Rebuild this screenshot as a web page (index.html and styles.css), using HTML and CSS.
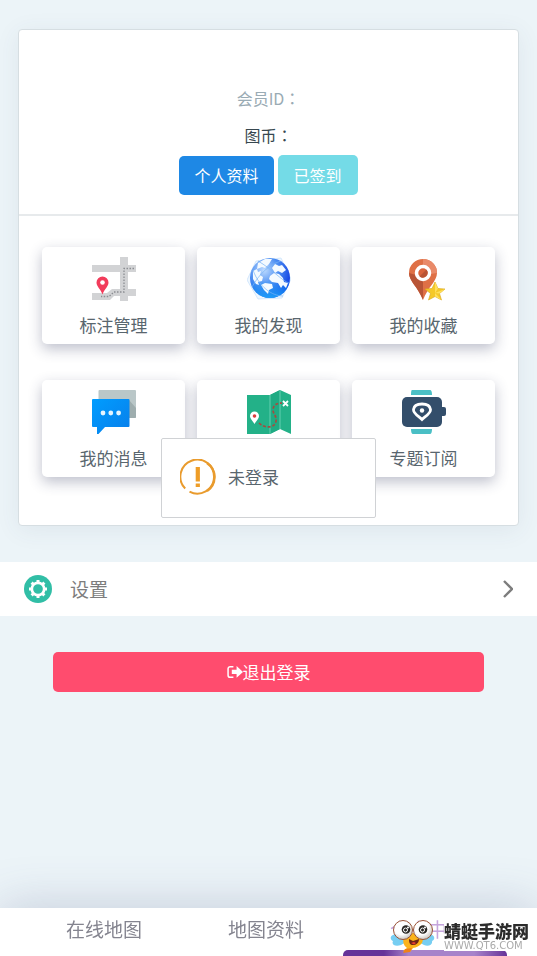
FILE: index.html
```html
<!DOCTYPE html>
<html lang="zh-CN">
<head>
<meta charset="utf-8">
<meta name="viewport" content="width=device-width, initial-scale=1">
<title>个人中心</title>
<link rel="stylesheet" href="styles.css">
</head>
<body>
<main>
  <section class="card">
    <header class="profile">
      <p class="member">会员ID<span class="colon" lang="zh-TW">：</span></p>
      <p class="coins">图币<span class="colon" lang="zh-TW">：</span></p>
      <div class="actions">
        <button class="btn btn-primary" type="button">个人资料</button>
        <button class="btn btn-signed" type="button">已签到</button>
      </div>
    </header>
    <nav class="tiles">
      <a class="tile" href="#">
        <svg class="tile-icon" viewBox="0 0 44 44">
          <path d="M0 8H28V0h8v8h8v7h-8v17h8v7h-8v5h-8v-5h-6l-4 4H0v-7h15l5-4h8V15H0z" fill="#d2d3d5"/>
          <path d="M42 11.500H32V35H22l-5 4.500H9" fill="none" stroke="#8c8e93" stroke-width="1.300" stroke-dasharray="1.500 1.500"/>
          <path d="M10.500 37.500C8.500 32 4.500 29.500 4.500 25.500a6 6 0 0 1 12 0c0 4-4 6.500-6 12z" fill="#f23c5b"/>
          <circle cx="10.500" cy="25.500" r="2.300" fill="#fff"/>
        </svg>
        <span>标注管理</span>
      </a>
      <a class="tile" href="#">
        <svg class="tile-icon" viewBox="0 0 44 44">
          <defs>
            <radialGradient id="globe" cx=".35" cy=".3" r=".75">
              <stop offset="0" stop-color="#bfdcff"/><stop offset=".5" stop-color="#4b8df2"/><stop offset="1" stop-color="#0834e0"/>
            </radialGradient>
            <linearGradient id="glow" x2="0" y2="1"><stop offset=".55" stop-color="#18b4ff" stop-opacity="0"/><stop offset="1" stop-color="#22b8ff" stop-opacity=".8"/></linearGradient>
          </defs>
          <path d="M9 4 34 1l10 21-9 19-24 1L0 23z" fill="#eef7ff" stroke="#c5e0fb" stroke-width=".7"/>
          <circle cx="23" cy="21" r="20" fill="url(#globe)"/>
          <circle cx="23" cy="21" r="20" fill="url(#glow)"/>
          <g fill="#f4faff">
            <path d="m11 6 7-4 7 0-3 5-4 4-3-1-5 2zM6 14l4-2 1 3 3-1-1 4 3 2-1 4-4 1 1 3-3-1-3-5z"/>
            <path d="m25 11 3-4 4 2 3-1 4 5-4 3-4-2-3 2z"/>
            <path d="m23 19 4-3 5 1 4 4 1 4 4 1-2 5-3-3-2 3-3-5-6-1-3-3z"/>
            <path d="m14 28 4-2 7 1 1 4-4 2-1 4-4-4z"/>
          </g>
          <path d="M5 30C12 17 23 7 34 4M11 4c14 8 24 20 31 22M6 13c6 17 19 26 30 26" fill="none" stroke="#78b5f5" stroke-width=".7"/>
        </svg>
        <span>我的发现</span>
      </a>
      <a class="tile" href="#">
        <svg class="tile-icon" viewBox="0 0 44 44">
          <path d="M21 43C16 30 7 24 7 16a14 14 0 0 1 28 0c0 8-9 14-14 27z" fill="#df7046"/>
          <path d="M21 43C16 30 7 24 7 16l14 4z" fill="#b85436"/>
          <path d="M21 2a14 14 0 0 1 14 14l-14 2z" fill="#e98a69"/>
          <circle cx="21" cy="16" r="6.500" fill="#d9633b" stroke="#fff" stroke-width="3.500"/>
          <path d="M17.500 19.500a5 5 0 0 0 7-7z" fill="#b95333"/>
          <path d="m33 25 3 6.500 7 .5-5.500 4.500 2 6.500-6.500-3.500-6.500 3.500 2-6.500L23 32l7-.5z" fill="#f5c928" stroke="#d9a51d" stroke-width=".6"/>
          <path d="m33 25 3 6.500-3 4.500zM43 32l-10 4 4.500.500zM39.500 43 33 36v3.500z" fill="#ffe05c"/>
        </svg>
        <span>我的收藏</span>
      </a>
      <a class="tile" href="#">
        <svg class="tile-icon" viewBox="0 0 44 44">
          <defs><linearGradient id="chat" x2="1" y2="1"><stop stop-color="#009dff"/><stop offset="1" stop-color="#087eea"/></linearGradient></defs>
          <rect x="6.500" y="0" width="37.500" height="28" rx="1" fill="#bac7c8"/>
          <path d="m37 10 7 8v9a1 1 0 0 1-1 1h-6z" fill="#9eadae"/>
          <path d="M1 9h35.500a1 1 0 0 1 1 1v26a1 1 0 0 1-1 1H13l-6.500 7H5v-7H1a1 1 0 0 1-1-1V10a1 1 0 0 1 1-1z" fill="url(#chat)"/>
          <g fill="#e5f5ff"><circle cx="11" cy="23" r="2.400"/><circle cx="18.800" cy="23" r="2.400"/><circle cx="26.600" cy="23" r="2.400"/></g>
        </svg>
        <span>我的消息</span>
      </a>
      <a class="tile" href="#">
        <svg class="tile-icon" viewBox="0 0 44 44">
          <path d="M0 5h23l10-5 11 5v39l-11-5-10 5H0z" fill="#23b188"/>
          <path d="M23 5 33 0v39l-10 5z" fill="#1fab83"/>
          <path d="M23 5v39M33 0v39" stroke="#65cfb0" stroke-width="1"/>
          <path d="M12 33c6 6 16 5 17-2 1-5-3-7-3-11 0-5 4-7 9-7" fill="none" stroke="#a64b3f" stroke-width="1.700" stroke-dasharray="3 1.800"/>
          <path d="M7.500 34C6 31 3 29 3 26a4.500 4.500 0 0 1 9 0c0 3-3 5-4.500 8z" fill="#fff"/>
          <circle cx="7.500" cy="26" r="1.800" fill="#dc3d3d"/>
          <path d="m36 11 5 5m0-5-5 5" stroke="#fff" stroke-width="1.800"/>
        </svg>
      </a>
      <a class="tile" href="#">
        <svg class="tile-icon" viewBox="0 0 44 44">
          <path d="M10 0h18q2 0 2 5H9q0-5 1-5zM9 39h21q0 5-2 5H11q-2 0-2-5z" fill="#4abfc5"/>
          <rect x="0" y="7" width="40" height="30" rx="5" fill="#334e6b"/>
          <path d="M39 17h3a2 2 0 0 1 2 2v5a2 2 0 0 1-2 2h-3z" fill="#334e6b"/>
          <path d="M20 29.500c-3-3-9-6-8.500-10 .4-3.700 4.200-5.500 8.500-5.500s8.100 1.800 8.500 5.500c.5 4-5.500 7-8.500 10z" fill="none" stroke="#fff" stroke-width="2.800"/>
          <circle cx="20" cy="20.500" r="2.200" fill="#fff"/>
        </svg>
        <span>专题订阅</span>
      </a>
    </nav>
  </section>

  <a class="setting" href="#">
    <svg class="gear" viewBox="0 0 28 28">
      <circle cx="14" cy="14" r="14" fill="#31bea6"/>
      <g stroke="#fff" fill="none"><circle cx="14" cy="14" r="6.200" stroke-width="2.700"/><path d="M14 5v3m0 12v3m9-9h-3M8 14H5M20.400 7.600l-2.200 2.200m-8.400 8.400-2.200 2.200m12.800 0-2.200-2.200M9.800 9.800 7.600 7.600" stroke-width="3"/></g>
    </svg>
    <span class="setting-label">设置</span>
    <svg class="chevron" viewBox="0 0 10 18"><path d="m1 1 8 8-8 8" fill="none" stroke="#7d7d7d" stroke-width="2.400"/></svg>
  </a>

  <button class="logout" type="button">
    <svg class="exit" viewBox="0 0 15 14"><path d="M6 1.500H3a2 2 0 0 0-2 2v6a2 2 0 0 0 2 2h3" fill="none" stroke="#fff" stroke-width="1.400"/><path d="M4.500 4.500H9V1l6 5.500L9 12V8.500H4.500z" fill="#fff"/></svg>退出登录
  </button>
</main>

<div class="toast" role="status">
  <svg class="warn" viewBox="0 0 36 36">
    <path d="M5.200 29.500A17 17 0 1 1 9.500 32.700" fill="none" stroke="#e99b2d" stroke-width="2"/>
    <path d="M27 4a17 17 0 0 1 0 28" fill="none" stroke="#e99b2d" stroke-width="2.600"/>
    <path d="M15.700 8h4.200v14.500h-4.200zM15.700 24.500h4.200v3.500h-4.200z" fill="#ee9d27"/>
  </svg>
  <span>未登录</span>
</div>

<nav class="tabs">
  <a class="tab" href="#">在线地图</a>
  <a class="tab" href="#">地图资料</a>
  <a class="tab tab-active" href="#">个人中心</a>
</nav>

<div class="brand">
  <svg class="mascot" viewBox="0 0 46 34">
    <defs><radialGradient id="eye" cx=".4" cy=".35" r=".65"><stop offset=".6" stop-color="#fff"/><stop offset="1" stop-color="#cbc8c3"/></radialGradient></defs>
    <path d="M8 15C0 15-1 20 3 22c-2 4 3 6 8 4l9-5zM37 15c8 0 9 5 5 7 1 4-4 6-8 4l-9-5z" fill="#77cef2"/>
    <path d="M15 17c3-4 14-4 17 0 3 6-2 11-9 12l-3 4-7-1 4-3c-4-3-5-8-2-12z" fill="#fbb31b"/>
    <path d="m19 20 4 2 6-2c0 4-3 6-6 6s-4-2-4-6z" fill="#6d2417"/>
    <path d="m21 24 3-1 2 1-2 1.500z" fill="#e93f30"/>
    <path d="m15 30 7-1-2 4-7 1z" fill="#ef8119"/>
    <circle cx="13" cy="11" r="9.500" fill="url(#eye)" stroke="#995236"/>
    <circle cx="33" cy="11" r="9.500" fill="url(#eye)" stroke="#995236"/>
    <circle cx="16" cy="10.500" r="4.300" fill="#292724"/><circle cx="33" cy="10.500" r="4.300" fill="#292724"/>
    <g fill="none" stroke="#fff"><circle cx="15.500" cy="11" r="2"/><circle cx="32.500" cy="11" r="2"/></g>
    <g fill="#fff"><circle cx="18" cy="8.500" r="1"/><circle cx="35" cy="8.500" r="1"/></g>
  </svg>
  <div class="brand-text">
    <strong>蜻蜓手游网</strong>
    <small>WWW.QT6.COM</small>
  </div>
</div>
</body>
</html>
```
FILE: styles.css
```css
* {
  box-sizing: border-box;
}

body {
  margin: 0;
  min-height: 100vh;
  background: #ecf4f8;
  color: #59666e;
  font: 17px/24px "Noto Sans CJK SC", sans-serif;
}

a {
  color: inherit;
  text-decoration: none;
}

button {
  border: 0;
  font: inherit;
  cursor: pointer;
}

svg {
  display: block;
  flex: none;
}

main {
  padding-top: 29px;
  padding-bottom: 48px;
}

.card {
  margin: 0 18px;
  border: 1px solid #d6dee2;
  border-radius: 4px;
  background: #fff;
  box-shadow: 0 4px 24px rgba(60, 75, 100, 0.08);
}

.profile {
  padding: 50px 16px 19px;
  border-bottom: 2px solid #e7eaec;
  font-size: 16px;
  line-height: 37px;
  text-align: center;
}

.profile p {
  margin: 0;
}

.member {
  color: #9aabb4;
}

.coins {
  color: #37474f;
}

.colon {
  font-family: "Noto Sans CJK TC", sans-serif;
}

.actions {
  display: flex;
  justify-content: center;
  align-items: flex-end;
  gap: 4px;
  margin-top: 1px;
}

.btn {
  height: 39px;
  padding: 0 15px;
  border-radius: 5px;
  color: #fff;
}

.btn-primary {
  background: #1e88e5;
}

.btn-signed {
  height: 40px;
  padding: 0 16px;
  background: #74dbe7;
}

.tiles {
  display: grid;
  grid-template-columns: repeat(3, 1fr);
  gap: 36px 12px;
  padding: 31px 23px 48px;
}

.tile {
  display: flex;
  flex-direction: column;
  align-items: center;
  gap: 12px;
  padding: 10px 0 7px;
  border-radius: 5px;
  background: #fff;
  box-shadow: 0 5px 14px rgba(40, 45, 85, 0.3);
}

.tile-icon {
  width: 44px;
  height: 44px;
}

.setting {
  display: flex;
  align-items: center;
  height: 54px;
  margin-top: 36px;
  padding: 0 24px;
  background: #fff;
  color: #7d7d7d;
  font-size: 19px;
}

.gear {
  width: 28px;
  height: 28px;
}

.setting-label {
  flex: 1;
  margin-left: 18px;
}

.chevron {
  width: 10px;
  height: 18px;
}

.logout {
  display: flex;
  align-items: center;
  justify-content: center;
  width: calc(100% - 106px);
  height: 40px;
  margin: 36px auto 0;
  border-radius: 5px;
  background: #ff4c6e;
  color: #fff;
}

.exit {
  width: 16px;
  height: 15px;
}

.toast {
  position: fixed;
  inset: 0;
  display: flex;
  align-items: center;
  gap: 12px;
  width: 215px;
  height: 80px;
  margin: auto;
  padding: 0 18px 2px;
  border: 1px solid #d0d2d5;
  border-radius: 2px;
  background: #fff;
}

.warn {
  width: 36px;
  height: 36px;
}

.tabs {
  position: fixed;
  right: 0;
  bottom: 0;
  left: 0;
  display: grid;
  grid-template-columns: repeat(3, 1fr);
  height: 48px;
  padding: 0 28px 0 23px;
  background: #fff;
  box-shadow: 0 0 50px rgba(75, 80, 130, 0.26);
  color: #84848f;
  font-size: 19px;
  line-height: 42px;
  text-align: center;
}

.tab {
  position: relative;
}

.tab-active {
  color: #c5a5dc;
}

.tab-active::after {
  content: "";
  position: absolute;
  right: 2px;
  bottom: 0;
  left: -4px;
  height: 6px;
  border-radius: 5px 5px 0 0;
  background: linear-gradient(90deg, #663399 25%, #a783ca 40%, #a783ca 80%, #663399);
}

.brand {
  position: fixed;
  right: 8px;
  bottom: 3px;
  display: flex;
  align-items: center;
  gap: 8px;
}

.mascot {
  width: 46px;
  height: 34px;
}

.brand-text {
  display: flex;
  flex-direction: column;
  background: #fff;
}

.brand strong {
  color: #2c2c2c;
  font-size: 17px;
  font-weight: 900;
  line-height: 20px;
}

.brand small {
  color: #aaa;
  font: 10px/10px "DejaVu Sans", sans-serif;
}
```
